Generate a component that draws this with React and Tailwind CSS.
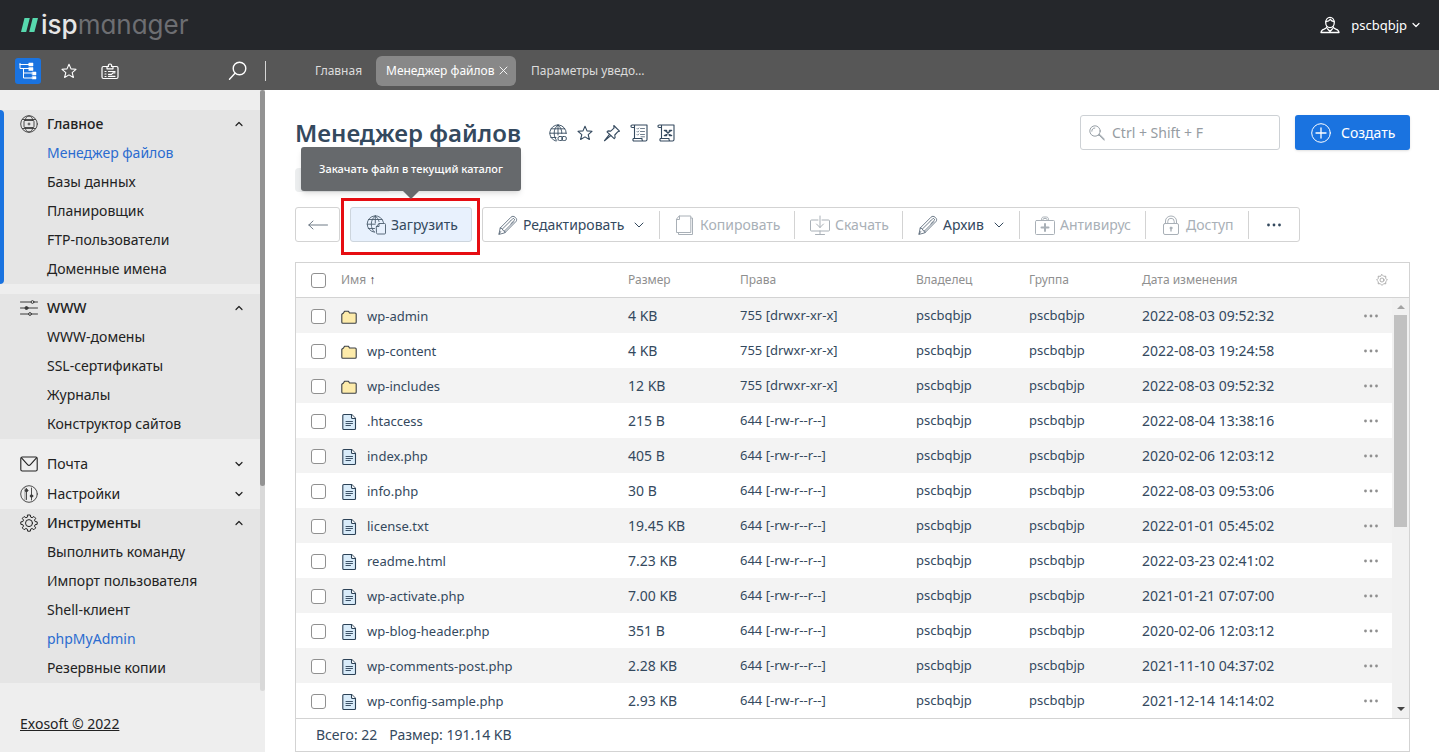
import React from "react";

function Svg({ w = 20, h = 20, sw = 1, className = "", children }) {
  return (
    <svg
      width={w}
      height={h}
      viewBox={`0 0 ${w} ${h}`}
      fill="none"
      stroke="currentColor"
      strokeWidth={sw}
      strokeLinecap="round"
      strokeLinejoin="round"
      aria-hidden="true"
      className={`shrink-0 ${className}`}
    >
      {children}
    </svg>
  );
}

const STAR = "M9 2.200 11 6.900l5 .4-3.800 3.300 1.200 4.900L9 12.900l-4.400 2.600 1.200-4.900L2 7.300l5-.4z";

const StarIcon = () => (
  <Svg w={18} h={18} sw={1.1}>
    <path d={STAR} />
  </Svg>
);

const TreeIcon = () => (
  <Svg w={18} h={18}>
    <path d="M1 1.500v5h9M1 2.500h9M4.500 6.500v9.500h9M4.500 11h9" />
    <path d="M10 1h4v3h-4zM10 5.500h4v3h-4zM13.500 10h3.500v3h-3.500zM13.500 14.500h3.500v2.500h-3.500z" fill="currentColor" strokeWidth="0.500" />
  </Svg>
);

const BadgeIcon = () => (
  <Svg w={18} h={18} sw={1.2}>
    <rect x="1" y="4.500" width="16" height="12" rx="1.500" />
    <path d="M6 6.800V4.500h1.500a1.700 1.700 0 1 1 3 0H12v2.300z" fill="#575757" />
    <path d="M4 9.500h1M4 12h1M4 14.500h1M7.500 9.500h6.500M7.500 14.300h6.500M7.500 12.300h3l1.500-1.500h2" />
  </Svg>
);

const SearchIcon = () => (
  <Svg w={20} h={20} sw={1.4}>
    <circle cx="12.500" cy="7.500" r="6.300" />
    <path d="m8 12.200-5.500 6" />
  </Svg>
);

const Chevron = ({ up }) => (
  <Svg w={10} h={8} sw={1.2}>
    <path d={up ? "M2 5.500 5 2.500l3 3" : "M2 2.500 5 5.500l3-3"} />
  </Svg>
);

const WideChevron = () => (
  <Svg w={10} h={8} sw={1}>
    <path d="M1 2l4 4 4-4" />
  </Svg>
);

const GlobeBoxIcon = () => (
  <Svg w={18} h={18} sw={0.9} className="text-[#3a3a3a]">
    <circle cx="9" cy="9" r="8.300" />
    <path d="M5 5.500C5.500 2.800 7 1 9 1s3.500 1.800 4 4.500M5 12.500C5.500 15.200 7 17 9 17s3.500-1.800 4-4.500M2.500 4.500h13M2.500 13.500h13" />
    <rect x="4" y="5.500" width="10" height="7" rx="1" />
    <path d="M8 9h2M9 8v2" />
  </Svg>
);

const SlidersIcon = () => (
  <Svg w={18} h={18} className="text-[#3a3a3a]">
    <path d="M.5 3h10.500M14 3h3.500M.5 9H17.500M.5 15h8.200M11.500 15h6" />
    <circle cx="12.500" cy="3" r="1.400" />
    <circle cx="6.500" cy="9" r="1.500" fill="currentColor" />
    <circle cx="10" cy="15" r="1.400" />
  </Svg>
);

const MailIcon = () => (
  <Svg w={18} h={18} sw={1.1}>
    <rect x=".8" y="2" width="16.400" height="14" rx="1.500" />
    <path d="m1.500 2.800 6.300 7a1.600 1.600 0 0 0 2.400 0l6.300-7" />
  </Svg>
);

const MixerIcon = () => (
  <Svg w={18} h={18} sw={0.9} className="text-[#3a3a3a]">
    <circle cx="9" cy="9" r="8.300" />
    <path d="M6.500 3.500v11M11.500 3v12" />
    <circle cx="6.500" cy="5.500" r="1.300" fill="currentColor" />
    <circle cx="11.500" cy="11" r="1.300" fill="currentColor" />
    <path d="M5 2.500V15" strokeWidth=".5" />
  </Svg>
);

const GearIcon = () => (
  <Svg w={18} h={18} sw={1}>
    <path d="M7.700 1h2.600l.4 2.100 1.400.6 1.800-1.200 1.800 1.800-1.200 1.800.6 1.400 2.100.4v2.400l-2.100.4-.6 1.400 1.200 1.800-1.800 1.800-1.800-1.200-1.400.6-.4 2.100H7.700l-.4-2.100-1.400-.6-1.800 1.200-1.800-1.800 1.200-1.800-.6-1.400L.8 10.300V7.900l2.100-.4.6-1.400-1.200-1.800 1.800-1.800 1.800 1.200 1.400-.6z" />
    <circle cx="9" cy="9.100" r="3.500" />
  </Svg>
);

const UserIcon = () => (
  <Svg w={20} h={18} sw={1.3}>
    <ellipse cx="10" cy="6.500" rx="4.300" ry="5.200" />
    <path d="M6 5.500c2.500 0 3.500-1 4.300-2.200.8 1.200 2 2 3.700 2.200" />
    <path d="M7 10.500c0 1.500-1 2-2.800 2.600C2 13.700 1.300 14.500 1 16.500h18c-.3-2-1-2.800-3.200-3.400-1.800-.6-2.800-1.100-2.800-2.600" />
    <path d="m7.500 12.800 2.500 2.700 2.500-2.700" />
  </Svg>
);

const GlobeLinkIcon = () => (
  <Svg w={18} h={18} sw={0.9}>
    <path d="M7 17.100A8.200 8.200 0 1 1 17.200 9.500" />
    <path d="M9 1v10M9 1C6.200 3.200 5.200 6 5.200 9s.8 5.500 2.500 7.500M9 1c2.800 2.200 3.800 5 3.800 8.500M2.300 4.800h13.400M.8 9.200h16.400M2 13.500h5" />
    <rect x="9" y="12.500" width="4.500" height="4" rx="1.500" />
    <rect x="12.800" y="12.500" width="4.500" height="4" rx="1.500" />
  </Svg>
);

const PinIcon = () => (
  <Svg w={18} h={18} sw={1.1}>
    <path d="M10.800 1.500 16.500 7.200l-1.600.5-3.100 3.300.3 2.700-.9 1L4 7.800l1-.9 2.700.2L11 4.200z" />
    <path d="M6.500 10.300 1.500 16.700l6.300-5.100" />
  </Svg>
);

const ScrollIcon = ({ excel }) => (
  <Svg w={18} h={18} sw={1.1}>
    <path d="M4.500 14.500V1H17v14.500a1.500 1.500 0 0 1-1.500 1.500H3.500M4.500 1H2.200a1.200 1.200 0 0 0 0 2.500h2.300M3.500 17a1.600 1.600 0 0 1 0-2.500H12v1a1.500 1.500 0 0 0 1.500 1.500" />
    {excel ? (
      <path d="m8.300 6.500 5.400 5M13.700 6.500l-5.400 5M7.500 6.500h2M12.500 6.500h2M7.500 11.500h2M12.500 11.500h2" strokeWidth="1.600" />
    ) : (
      <path d="m7 4.500.7.700L8.800 4M10.500 4.500h4M7 7.500l.7.700L8.800 7M10.500 7.500h4M7 10.500l.7.700L8.800 10M10.500 10.500h4M11 12.800h3.500" strokeWidth=".7" />
    )}
  </Svg>
);

const GlobeFileIcon = () => (
  <Svg sw={0.9} className="text-[#4b5c6d]">
    <path d="M8.500 17.200A8.200 8.200 0 1 1 17.500 7.500" />
    <path d="M9.300 1v7M9.300 1C6.500 3 5.300 6 5.300 9.200s1.200 6 3.200 7.800M9.300 1c2 1.500 3.200 3.500 3.700 5.500M2.500 4.500h13.500M1.200 9.200h8M2.300 13.500h6.200" />
    <path d="M10.500 11.500 13 8.500h5.500a1 1 0 0 1 1 1V18a1 1 0 0 1-1 1h-7a1 1 0 0 1-1-1zM10.500 11.500H13v-3" />
  </Svg>
);

const PencilIcon = () => (
  <Svg sw={0.8} className="text-[#4b5c6d]">
    <path d="M1 19l1.200-6L13 2.200c1.300-1.200 2.600-1.200 4.200.1 1.600 1.400 1.900 2.800.7 4.300L7 17.600zM2.200 13l1.900.6 1 2 1.700.5.2 1.500M4.600 13.800 12.500 6M6.500 16 15.700 6.800M12.500 6l2.800-2.800 1.500 1.600-4 4M1 19l1.800-2.500" />
  </Svg>
);

const CopyIcon = () => (
  <Svg>
    <path d="M4.500 1h11.300v16.500H1.500V4.500zM4.500 1v3.500H1.500M15.800 3H17.500v16.500H3.500v-2" />
  </Svg>
);

const DownloadIcon = () => (
  <Svg>
    <path d="M8 5H1.500a1 1 0 0 0-1 1v9a1 1 0 0 0 1 1h17a1 1 0 0 0 1-1V6a1 1 0 0 0-1-1H12M10 1v11.500M6.500 9l3.500 3.500L13.500 9M10 16v3M5.500 19.500h9" />
  </Svg>
);

const MedkitIcon = () => (
  <Svg>
    <rect x=".5" y="5.500" width="19" height="14" rx="1" />
    <path d="M6.500 5.500V4.200C6.500 3 7.500 2 8.500 2h3c1 0 2 1 2 2.200v1.300M8 5.500v-1c0-.6.5-1 1-1h2c.5 0 1 .4 1 1v1" />
    <path d="M6.500 12.500h7M10 9v7" strokeWidth="2" />
  </Svg>
);

const LockIcon = () => (
  <Svg>
    <rect x="2.500" y="8.500" width="15" height="11" rx="1.500" />
    <path d="M4.500 8.500V6A5.500 5 0 0 1 15.500 6v2.500M6.800 8.500V6.300a3.200 3 0 0 1 6.400 0v2.200" />
    <circle cx="10" cy="13" r="1" fill="currentColor" />
    <path d="M10 13v3" strokeWidth="1.400" />
  </Svg>
);

const FolderIcon = () => (
  <Svg w={16} h={14} sw={1.1} className="text-[#3a3f45]">
    <path d="M.8 4.200 2.500 3l1-1.800h4L8.500 3h5.700a1 1 0 0 1 1 1v8.200a1 1 0 0 1-1 1H1.800a1 1 0 0 1-1-1z" fill="#fdebaa" />
  </Svg>
);

const FileIcon = () => (
  <Svg w={16} h={18} sw={1.1} className="text-[#2c4257]">
    <path d="M2.800 1.500h7.700l4 4v10a1 1 0 0 1-1 1H2.800a1 1 0 0 1-1-1v-13a1 1 0 0 1 1-1z" fill="#d9ecfa" />
    <path d="M10.500 1.500v3a1 1 0 0 0 1 1h3" fill="#fff" />
    <path d="M5 8.500h6.500M5 10.500h6.500M5 12.500h4.500" strokeWidth=".9" />
  </Svg>
);

const Dots = ({ className }) => (
  <svg width="16" height="4" viewBox="0 0 16 4" fill="currentColor" aria-hidden="true" className={className}>
    <circle cx="2.500" cy="2" r="1.400" />
    <circle cx="8" cy="2" r="1.400" />
    <circle cx="13.500" cy="2" r="1.400" />
  </svg>
);

const SmallGear = () => (
  <Svg w={12} h={12} sw={0.7}>
    <path d="M6 .6 7.700 2.300 9.800 2.200 9.700 4.300 11.400 6 9.700 7.700l.1 2.100-2.100-.1L6 11.400 4.300 9.700l-2.100.1.1-2.100L.6 6l1.700-1.700-.1-2.100 2.100.1z" />
    <circle cx="6" cy="6" r="2" />
  </Svg>
);

const groups = [
  {
    title: "Главное",
    icon: <GlobeBoxIcon />,
    items: ["Менеджер файлов", "Базы данных", "Планировщик", "FTP-пользователи", "Доменные имена"],
    active: true,
  },
  { title: "WWW", icon: <SlidersIcon />, items: ["WWW-домены", "SSL-сертификаты", "Журналы", "Конструктор сайтов"] },
  { title: "Почта", icon: <MailIcon /> },
  { title: "Настройки", icon: <MixerIcon /> },
  {
    title: "Инструменты",
    icon: <GearIcon />,
    items: ["Выполнить команду", "Импорт пользователя", "Shell-клиент", "phpMyAdmin", "Резервные копии"],
  },
];
const highlighted = ["Менеджер файлов", "phpMyAdmin"];

function NavGroup({ group }) {
  const open = Boolean(group.items);
  return (
    <section
      className={
        open
          ? `bg-[#e5e5e5] ${group.active ? "relative" : ""} ${group.title === "Инструменты" ? "" : "mb-[10px]"}`
          : ""
      }
    >
      {group.active && <span className="absolute inset-y-0 left-0 w-1 rounded-r bg-[#1a73e0]" />}
      <button
        type="button"
        className={`flex w-full items-center pr-4 pl-5 text-[#222] ${open ? "h-7 font-medium" : "h-[30px]"}`}
      >
        {group.icon}
        <span className="ml-[9px] flex-1 text-left">{group.title}</span>
        <Chevron up={open} />
      </button>
      {open && (
        <ul className="pb-px">
          {group.items.map((t) => (
            <li key={t}>
              <a
                href="#"
                className={`block h-[29px] pl-[47px] leading-[29px] ${highlighted.includes(t) ? "text-[#2b6cd0]" : "text-[#222]"}`}
              >
                {t}
              </a>
            </li>
          ))}
        </ul>
      )}
    </section>
  );
}

const rows = [
  ["wp-admin", "4 KB", "755 [drwxr-xr-x]", "2022-08-03 09:52:32"],
  ["wp-content", "4 KB", "755 [drwxr-xr-x]", "2022-08-03 19:24:58"],
  ["wp-includes", "12 KB", "755 [drwxr-xr-x]", "2022-08-03 09:52:32"],
  [".htaccess", "215 B", "644 [-rw-r--r--]", "2022-08-04 13:38:16"],
  ["index.php", "405 B", "644 [-rw-r--r--]", "2020-02-06 12:03:12"],
  ["info.php", "30 B", "644 [-rw-r--r--]", "2022-08-03 09:53:06"],
  ["license.txt", "19.45 KB", "644 [-rw-r--r--]", "2022-01-01 05:45:02"],
  ["readme.html", "7.23 KB", "644 [-rw-r--r--]", "2022-03-23 02:41:02"],
  ["wp-activate.php", "7.00 KB", "644 [-rw-r--r--]", "2021-01-21 07:07:00"],
  ["wp-blog-header.php", "351 B", "644 [-rw-r--r--]", "2020-02-06 12:03:12"],
  ["wp-comments-post.php", "2.28 KB", "644 [-rw-r--r--]", "2021-11-10 04:37:02"],
  ["wp-config-sample.php", "2.93 KB", "644 [-rw-r--r--]", "2021-12-14 14:14:02"],
];

const Check = ({ label }) => (
  <input
    type="checkbox"
    aria-label={label}
    className="block size-[15px] appearance-none rounded-[3px] border border-[#909090] bg-white checked:bg-[#1a73e0]"
  />
);

const tools = [
  { label: "Редактировать", icon: <PencilIcon />, menu: true, width: "w-[177px]" },
  { label: "Копировать", icon: <CopyIcon />, off: true, width: "w-[135px]" },
  { label: "Скачать", icon: <DownloadIcon />, off: true, width: "w-[108px]" },
  { label: "Архив", icon: <PencilIcon />, menu: true, width: "w-[117px]" },
  { label: "Антивирус", icon: <MedkitIcon />, off: true, width: "w-[126px]" },
  { label: "Доступ", icon: <LockIcon />, off: true, width: "w-[103px]" },
];

export default function App() {
  return (
    <div className="flex min-h-screen flex-col bg-white font-['Noto_Sans',sans-serif] text-sm text-[#34495e]">
      <header className="flex h-[50px] items-center justify-between bg-[#25272b] pr-[18px] pl-[21px] text-white">
        <a href="#" className="flex items-center gap-[3px] font-['Inter',sans-serif] text-[26px] leading-8 [font-feature-settings:'cv11']">
          <svg width="17" height="14" viewBox="0 0 17 14" fill="#57d9ae" aria-hidden="true">
            <path d="M3.500 0h5.300L5.200 14H0zM11.700 0h5.300l-3.600 14H8.200z" />
          </svg>
          <span>
            <span className="font-medium text-[#e6e6e6]">isp</span>
            <span className="text-[#6d6e72]">manager</span>
          </span>
        </a>
        <button type="button" className="flex items-center text-[13px]">
          <UserIcon />
          <span className="mr-1 ml-[11px]">pscbqbjp</span>
          <Chevron />
        </button>
      </header>

      <div className="flex h-10 items-center bg-[#575757] pt-px text-white">
        <div className="flex w-[266px] shrink-0 items-center gap-[15px] pl-[15px]">
          <button type="button" aria-label="Дерево" className="flex size-[26px] items-center justify-center rounded-[3px] bg-[#1a73e0]">
            <TreeIcon />
          </button>
          <button type="button" aria-label="Избранное" className="flex size-[26px] items-center justify-center">
            <StarIcon />
          </button>
          <button type="button" aria-label="Карточка" className="flex size-[26px] items-center justify-center">
            <BadgeIcon />
          </button>
          <button type="button" aria-label="Поиск" className="ml-auto flex size-[26px] items-center justify-center">
            <SearchIcon />
          </button>
          <span className="h-5 w-px bg-[#d5d5d5]" />
        </div>
        <nav className="ml-10 flex gap-[5px] text-xs text-[#dcdcdc]">
          <a href="#" className="flex h-[30px] w-[65px] items-center justify-center">Главная</a>
          <a href="#" className="flex h-[30px] w-[140px] items-center justify-between rounded-md bg-[#888] pr-2 pl-[10px] text-white">
            Менеджер файлов
            <Svg w={9} h={9} sw={0.9}>
              <path d="m1 1 7 7M8 1 1 8" />
            </Svg>
          </a>
          <a href="#" className="flex h-[30px] items-center px-[10px]">Параметры уведо…</a>
        </nav>
      </div>

      <div className="flex flex-1">
        <aside className="flex w-[265px] shrink-0 bg-[#eee]">
          <div className="flex-1 pt-5">
            {groups.map((g) => (
              <NavGroup key={g.title} group={g} />
            ))}
            <a href="#" className="mt-[31px] ml-5 inline-block leading-5 text-[#222] underline">
              Exosoft © 2022
            </a>
          </div>
          <div className="mb-[61px] w-[5px] rounded-b bg-[#d9d9d9]">
            <div className="h-[396px] rounded-[3px] bg-[#939393]" />
          </div>
        </aside>

        <main className="min-w-0 flex-1 pr-[29px] pl-[30px]">
          <div className="mt-[25px] flex h-[35px] items-center">
            <h1 className="text-2xl leading-8 font-semibold">Менеджер файлов</h1>
            <div className="ml-7 flex gap-[9px]">
              <button type="button" aria-label="Ссылка"><GlobeLinkIcon /></button>
              <button type="button" aria-label="В избранное"><StarIcon /></button>
              <button type="button" aria-label="Закрепить"><PinIcon /></button>
              <button type="button" aria-label="Журнал"><ScrollIcon /></button>
              <button type="button" aria-label="Экспорт"><ScrollIcon excel /></button>
            </div>
            <label className="ml-auto flex h-[35px] w-[200px] items-center gap-[7px] rounded-[3px] border border-[#cdd1d5] px-2 text-[#8b949c]">
              <Svg w={16} h={16} sw={0.9}>
                <circle cx="6" cy="6" r="5.200" />
                <path d="M2.800 6.200C2.800 4.300 4 3 5.800 3M10 10l5 5.200M10.800 9.500l4.700 4.800M9.500 10.500l.8-.8" />
              </Svg>
              <input
                type="text"
                aria-label="Поиск"
                placeholder="Ctrl + Shift + F"
                className="h-full min-w-0 flex-1 leading-6 placeholder:text-[#969ca2] focus:outline-none"
              />
            </label>
            <button type="button" className="ml-[15px] flex h-[35px] w-[115px] items-center gap-[10px] rounded-[3px] bg-[#1a73e0] pl-4 text-white shadow">
              <Svg>
                <circle cx="10" cy="10" r="9.300" />
                <path d="M10 5v10M5 10h10" strokeWidth="1.300" />
              </Svg>
              Создать
            </button>
          </div>

          <div className="mt-[18px] h-6 w-24 rounded bg-[#eceeef]" />

          <div className="mt-[15px] flex h-[35px] gap-[10px]">
            <button type="button" aria-label="Назад" className="flex w-[45px] items-center justify-center rounded-[3px] border border-[#d3d3d3]">
              <Svg w={20} h={12} sw={0.9} className="text-[#5d6b78]">
                <path d="M19.500 6H.8M5 2 .8 6 5 10" />
              </Svg>
            </button>
            <div className="relative flex">
              <button type="button" aria-describedby="upload-tip" className="flex w-[122px] items-center gap-[5px] rounded-[3px] border border-[#cdd5dd] bg-[#e8f1fd] pl-[15px]">
                <GlobeFileIcon />
                Загрузить
              </button>
              <div className="pointer-events-none absolute -top-[9px] -right-2 -bottom-[13px] -left-[9px] border-[3px] border-[#e60d12]" />
              <div
                id="upload-tip"
                role="tooltip"
                className="absolute bottom-[51px] left-1/2 flex h-11 w-[220px] -translate-x-1/2 items-center justify-center rounded-[3px] bg-[#66696c] text-[11px] font-medium whitespace-nowrap text-white shadow-md"
              >
                Закачать файл в текущий каталог
                <svg width="16" height="8" viewBox="0 0 16 8" className="absolute top-full left-1/2 -translate-x-1/2" aria-hidden="true">
                  <path d="M0 0h16L8 8z" fill="#66696c" />
                </svg>
              </div>
            </div>
            <div className="flex items-center rounded-[3px] border border-[#d3d3d3]">
              {tools.map((t) => (
                <button
                  key={t.label}
                  type="button"
                  disabled={t.off}
                  className={`flex h-7 items-center gap-[5px] border-r border-[#d3d3d3] px-[15px] ${t.width} ${t.off ? "text-[#a9b0b7]" : ""}`}
                >
                  {t.icon}
                  {t.label}
                  {t.menu && (
                    <span className="ml-auto">
                      <WideChevron />
                    </span>
                  )}
                </button>
              ))}
              <button type="button" aria-label="Ещё" className="flex h-7 w-[50px] items-center justify-center">
                <Dots />
              </button>
            </div>
          </div>

          <div className="mt-5 border border-[#d3d3d3]">
            <div className="flex">
              <table className="min-w-0 flex-1 table-fixed border-separate border-spacing-0 text-left">
                <colgroup>
                  <col className="w-[45px]" />
                  <col className="w-[287px]" />
                  <col className="w-[112px]" />
                  <col className="w-[176px]" />
                  <col className="w-[113px]" />
                  <col className="w-[113px]" />
                  <col className="w-[208px]" />
                  <col className="w-[42px]" />
                </colgroup>
                <thead className="text-xs text-[#8f8f8f] [&_th]:h-[35px] [&_th]:border-b [&_th]:border-[#d3d3d3] [&_th]:p-0 [&_th]:font-normal">
                  <tr>
                    <th><div className="pt-px pl-[15px]"><Check label="Выбрать все" /></div></th>
                    <th>Имя <span className="text-[#333]">↑</span></th>
                    <th>Размер</th>
                    <th>Права</th>
                    <th>Владелец</th>
                    <th>Группа</th>
                    <th>Дата изменения</th>
                    <th>
                      <button type="button" aria-label="Настройка колонок" className="ml-auto mr-1 block"><SmallGear /></button>
                    </th>
                  </tr>
                </thead>
                <tbody className="[&_td]:h-[35px] [&_td]:p-0">
                  {rows.map(([name, size, rights, date], i) => (
                    <tr key={name} className="odd:bg-[#f3f3f3]">
                      <td><div className="pt-px pl-[15px]"><Check label={name} /></div></td>
                      <td>
                        <a href="#" className="flex items-center gap-[10px] pt-[2px] text-[13px]">
                          {i < 3 ? <FolderIcon /> : <FileIcon />}
                          {name}
                        </a>
                      </td>
                      <td>{size}</td>
                      <td className="text-[13px]">{rights}</td>
                      <td className="text-[13px]">pscbqbjp</td>
                      <td className="text-[13px]">pscbqbjp</td>
                      <td>{date}</td>
                      <td>
                        <button type="button" aria-label={`Действия: ${name}`} className="ml-[13px] block text-[#8f8f8f]"><Dots /></button>
                      </td>
                    </tr>
                  ))}
                </tbody>
              </table>
              <div className="flex w-[17px] shrink-0 flex-col">
                <div className="h-[35px] border-b border-[#d3d3d3]" />
                <div className="flex flex-1 flex-col items-center bg-[#f1f1f1] pb-[6px]">
                  <svg width="8" height="17" viewBox="0 0 8 17" fill="#a3a3a3" aria-hidden="true">
                    <path d="M0 11h8L4 7z" />
                  </svg>
                  <div className="h-[212px] w-[13px] bg-[#c1c1c1]" />
                  <svg width="8" height="5" viewBox="0 0 8 5" fill="#444" className="mt-auto" aria-hidden="true">
                    <path d="M0 0h8L4 4z" />
                  </svg>
                </div>
              </div>
            </div>
            <footer className="flex h-[33px] items-center gap-3 border-t border-[#d3d3d3] pl-5">
              <span>Всего: 22</span>
              <span>Размер: 191.14 KB</span>
            </footer>
          </div>
        </main>
      </div>
    </div>
  );
}
